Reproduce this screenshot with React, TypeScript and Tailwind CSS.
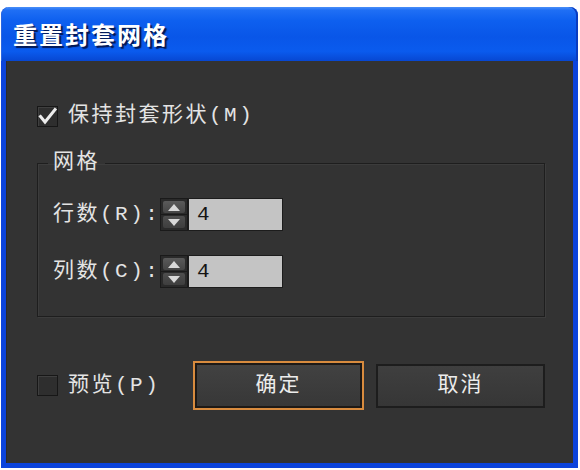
import React from "react";

const FONT = { fontFamily: '"Liberation Mono", "Noto Sans CJK SC", monospace' };

function Check({ checked }: { checked: boolean }) {
  return (
    <div className="w-[21px] h-[21px] border border-[#171717] bg-[#2e2e2e] shadow-[inset_1px_1px_0_#3f3f3f] flex items-center justify-center shrink-0">
      {checked && (
        <svg width="19" height="19" viewBox="0 0 19 19">
          <path d="M2.5 9.5 L7 15 L17 2.5" fill="none" stroke="#ececec" strokeWidth="3" strokeLinecap="square" />
        </svg>
      )}
    </div>
  );
}

function Spinner() {
  return (
    <div className="w-[28px] h-[33px] border border-[#1a1a1a] bg-[#2a2a2a] flex flex-col shrink-0">
      <div className="flex-1 flex items-center justify-center px-[2px] pt-[2px] pb-[1px] border-b border-[#1a1a1a]">
        <div className="w-full h-full rounded-[2px] bg-[linear-gradient(to_bottom,#5a5a5a,#454545)] flex items-center justify-center">
          <svg width="12" height="7" viewBox="0 0 12 7">
            <path d="M6 0 L12 7 L0 7 Z" fill="#d8d8d8" />
          </svg>
        </div>
      </div>
      <div className="flex-1 flex items-center justify-center px-[2px] pt-[1px] pb-[2px]">
        <div className="w-full h-full rounded-[2px] bg-[linear-gradient(to_bottom,#4e4e4e,#3e3e3e)] flex items-center justify-center">
          <svg width="12" height="7" viewBox="0 0 12 7">
            <path d="M0 0 L12 0 L6 7 Z" fill="#d8d8d8" />
          </svg>
        </div>
      </div>
    </div>
  );
}

function FieldRow({ label }: { label: string }) {
  return (
    <div className="flex items-center h-[33px] ml-[5px]">
      <div className="w-[107px] text-[21px] leading-[22px] tracking-[2.5px] text-[#e4e4e4] whitespace-nowrap" style={FONT}>
        {label}
      </div>
      <Spinner />
      <div
        className="w-[95px] h-[33px] border border-[#1c1c1c] bg-[#c4c4c4] flex items-center pl-[8px] text-[21px] text-[#141414]"
        style={{ fontFamily: '"Courier New", "Liberation Mono", monospace' }}
      >
        4
      </div>
    </div>
  );
}

export default function App() {
  return (
    <div className="w-[580px] h-[470px] bg-white overflow-hidden">
      <div className="ml-[1px] mt-[7px] w-[577px] h-[461px] flex flex-col">
        <div className="h-[54px] rounded-t-[8px] bg-[linear-gradient(to_bottom,#4a8ff7_0%,#1f6ff5_6%,#0e60ef_25%,#0956e8_55%,#0a5bee_82%,#0747d2_100%)] flex items-center pl-[12px] shadow-[inset_1px_0_0_#2a66e0,inset_-2px_0_0_#0a3cc0]">
          <span
            className="text-[24px] font-bold tracking-[2px] text-white [text-shadow:2px_2px_1px_rgba(0,0,30,0.75)]"
            style={{ fontFamily: '"Noto Sans CJK SC", sans-serif' }}
          >
            重置封套网格
          </span>
        </div>
        <div className="flex-1 bg-[#333333] border-x-[5px] border-b-[5px] border-[#0c44dc] shadow-[inset_1px_0_0_#2b2b2b] flex flex-col pl-[31px] pt-[44px]">
          <div className="flex items-center h-[22px]">
            <Check checked />
            <span className="ml-[10px] text-[21px] leading-[22px] tracking-[2.5px] text-[#e4e4e4] whitespace-nowrap" style={FONT}>
              保持封套形状(M)
            </span>
          </div>
          <fieldset className="mt-[25px] w-[508px] border border-[#1e1e1e] shadow-[inset_1px_1px_0_#3c3c3c,1px_1px_0_#3c3c3c] pl-[10px] pt-[24px] pb-[28px] flex flex-col gap-[24px]">
            <legend className="px-[5px] text-[21px] leading-[22px] tracking-[2.5px] text-[#e4e4e4]" style={FONT}>
              网格
            </legend>
            <FieldRow label="行数(R):" />
            <FieldRow label="列数(C):" />
          </fieldset>
          <div className="mt-[44px] flex items-center">
            <Check checked={false} />
            <span className="ml-[10px] w-[125px] text-[21px] leading-[22px] tracking-[2.5px] text-[#e4e4e4] whitespace-nowrap" style={FONT}>
              预览(P)
            </span>
            <button
              className="w-[171px] h-[49px] border-2 border-[#d88b3e] shadow-[inset_0_0_0_2px_#1d1916] bg-[linear-gradient(to_bottom,#424242,#373737)] text-[21px] tracking-[2px] text-[#ececec] flex items-center justify-center"
              style={FONT}
            >
              确定
            </button>
            <button
              className="ml-[12px] w-[169px] h-[44px] border-2 border-[#1d1d1d] bg-[linear-gradient(to_bottom,#3f3f3f,#363636)] text-[21px] tracking-[2px] text-[#ececec] flex items-center justify-center"
              style={FONT}
            >
              取消
            </button>
          </div>
        </div>
      </div>
    </div>
  );
}
